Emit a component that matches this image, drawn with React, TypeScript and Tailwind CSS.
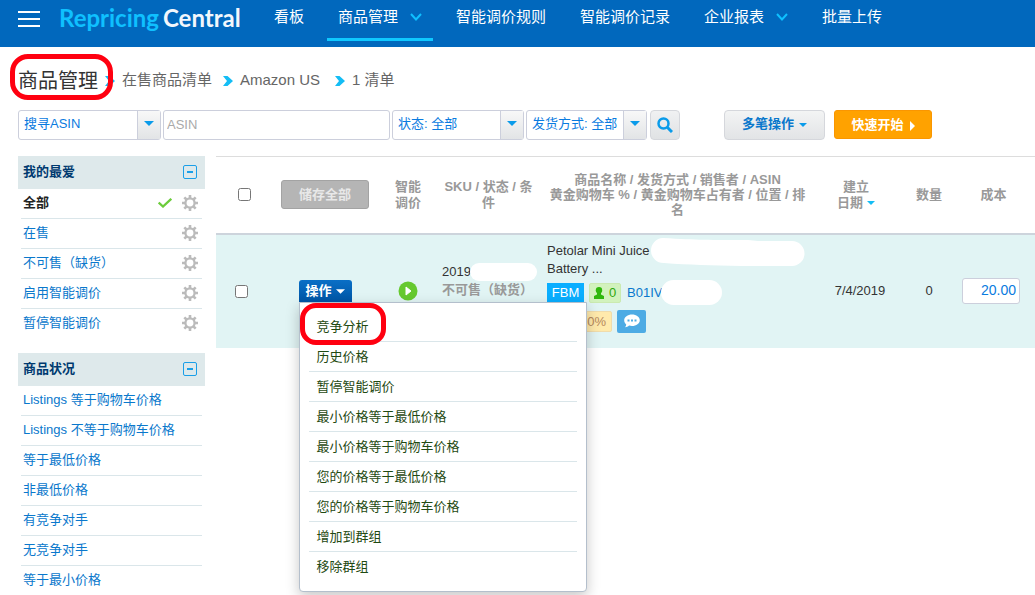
import { useState } from 'react';
import type { ReactNode } from 'react';
import clsx from 'clsx';

const NAV = [
  { label: '看板' },
  { label: '商品管理', active: true, menu: true },
  { label: '智能调价规则' },
  { label: '智能调价记录' },
  { label: '企业报表', menu: true },
  { label: '批量上传' },
];

const FAVORITES = ['全部', '在售', '不可售（缺货）', '启用智能调价', '暂停智能调价'];

const CONDITIONS = [
  'Listings 等于购物车价格',
  'Listings 不等于购物车价格',
  '等于最低价格',
  '非最低价格',
  '有竞争对手',
  '无竞争对手',
  '等于最小价格',
];

const ACTIONS = [
  '竞争分析',
  '历史价格',
  '暂停智能调价',
  '最小价格等于最低价格',
  '最小价格等于购物车价格',
  '您的价格等于最低价格',
  '您的价格等于购物车价格',
  '增加到群组',
  '移除群组',
];

function GearIcon() {
  return (
    <svg viewBox="0 0 16 16" className="h-4 w-4 text-[#bbbbbb]" fill="none" stroke="currentColor" aria-hidden>
      <circle cx="8" cy="8" r="4.6" strokeWidth="2.3" />
      <path
        strokeWidth="2.6"
        d="M8 0v3M8 13v3M0 8h3M13 8h3M2.3 2.3l2.200 2.200M11.500 11.500l2.200 2.200M2.300 13.700l2.200-2.200M11.500 4.500l2.200-2.200"
      />
    </svg>
  );
}

function Caret({ className }: { className?: string }) {
  return (
    <svg viewBox="0 0 10 5" className={className} fill="currentColor" aria-hidden>
      <path d="M0 0h10L5 5z" />
    </svg>
  );
}

function CrumbArrow() {
  return (
    <svg viewBox="0 0 10 10" className="h-[10px] w-[10px] shrink-0 text-[#14bdf5]" fill="currentColor" aria-hidden>
      <path d="M0 0h4.500L10 5l-5.500 5H0l4-5z" />
    </svg>
  );
}

function FilterSelect({ label, value, className }: { label: string; value: string; className: string }) {
  return (
    <div className={clsx('relative h-[30px]', className)}>
      <select
        aria-label={label}
        className="h-full w-full appearance-none rounded-[3px] border border-[#cccfdc] bg-white pb-[2px] pl-[5px] text-[13px] text-[#0a7be0] outline-none"
      >
        <option>{value}</option>
      </select>
      <span className="pointer-events-none absolute top-px right-px bottom-px flex w-[23px] items-center justify-center border-l border-[#cccfdc] bg-gradient-to-b from-[#f8f8f8] to-[#e2e4e6]">
        <Caret className="mb-1 h-[5px] w-[10px] text-[#0a9bea]" />
      </span>
    </div>
  );
}

function SidePanel({ title, children }: { title: string; children: ReactNode }) {
  return (
    <section>
      <div className="flex h-[33px] items-center justify-between bg-[#dee9eb] pr-2 pb-px pl-[5px]">
        <h2 className="text-[13px] font-bold text-[#003a70]">{title}</h2>
        <button type="button" aria-label={`收起${title}`}>
          <svg viewBox="0 0 14 14" className="h-[14px] w-[14px]" fill="none" stroke="#1a9fe8" aria-hidden>
            <rect x="0.5" y="0.5" width="13" height="13" rx="1.5" />
            <path d="M4 7h6" strokeWidth="2" />
          </svg>
        </button>
      </div>
      <ul className="px-[3px]">{children}</ul>
    </section>
  );
}

function ActionMenu() {
  return (
    <ul className="absolute top-full left-0 z-20 w-72 rounded-b-[4px] border border-[#b4bfcc] bg-white px-[9px] pt-[9px] pb-[10px] text-left shadow-[0_5px_14px_rgba(0,0,0,0.22)]">
      {ACTIONS.map((action, i) => (
        <li key={action} className="relative border-b border-[#dae6ea] last:border-b-0">
          <button type="button" className="block w-full pt-[3px] pb-[2px] pl-2 text-left text-[13px] leading-6 text-[#1f4a12]">
            {action}
          </button>
          {i === 0 && (
            <span className="pointer-events-none absolute -top-[9px] -left-[9px] h-[42px] w-[86px] rounded-[16px] border-5 border-[#ff0010]" />
          )}
        </li>
      ))}
    </ul>
  );
}

function ListingTable() {
  const [open, setOpen] = useState(true);

  return (
    <table className="w-full table-fixed border-collapse text-[13px]">
      <colgroup>
        <col className="w-[55px]" />
        <col className="w-[108px]" />
        <col className="w-[58px]" />
        <col className="w-[103px]" />
        <col />
        <col className="w-[82px]" />
        <col className="w-[64px]" />
        <col className="w-[74px]" />
      </colgroup>
      <thead>
        <tr className="h-[77px] border-t border-b-2 border-t-[#dddddd] border-b-[#cdd4dc] text-center leading-4 text-[#999999]">
          <th className="pl-[2px]">
            <input type="checkbox" aria-label="全选" className="block mx-auto h-[13px] w-[13px]" />
          </th>
          <th>
            <button
              type="button"
              className="h-[29px] w-[88px] rounded-[3px] border border-[#a3a3a3] bg-[#b5b5b5] text-[13px] font-bold text-[#e8e8e8]"
            >
              储存全部
            </button>
          </th>
          <th className="px-3 font-bold">智能调价</th>
          <th className="px-1 font-bold">SKU / 状态 / 条件</th>
          <th className="px-1 leading-[15px] font-bold">
            商品名称 / 发货方式 / 销售者 / ASIN
            <br />
            黄金购物车 % / 黄金购物车占有者 / 位置 / 排
            <br />名
          </th>
          <th className="font-bold">
            建立
            <br />
            <span className="inline-flex items-center gap-1">
              日期
              <Caret className="h-1 w-2 text-[#14bdf5]" />
            </span>
          </th>
          <th className="font-bold">数量</th>
          <th className="pr-[9px] font-bold">成本</th>
        </tr>
      </thead>
      <tbody>
        <tr className="h-[114px] bg-[#e1f4f4] text-[#333333]">
          <td className="pr-1">
            <input type="checkbox" aria-label="选择商品" className="block mx-auto h-[13px] w-[13px]" />
          </td>
          <td>
            <div className="relative mx-auto w-[53px]">
              <button
                type="button"
                aria-expanded={open}
                onClick={() => setOpen(!open)}
                className="flex h-[22px] w-full items-center justify-center gap-1 rounded-t-[3px] bg-gradient-to-b from-[#0a6fc6] to-[#0055a5] font-bold text-white"
              >
                操作
                <Caret className="h-[5px] w-[9px]" />
              </button>
              {open && <ActionMenu />}
            </div>
          </td>
          <td>
            <button type="button" aria-label="启用智能调价" className="mx-auto block">
              <svg viewBox="0 0 20 20" className="h-5 w-5" aria-hidden>
                <circle cx="10" cy="10" r="9.5" fill="#66c92f" />
                <path d="M8 6l5 4-5 4z" fill="#fff" stroke="#fff" />
              </svg>
            </button>
          </td>
          <td className="pb-5 pl-[5px] leading-[18px]">
            <div className="relative">
              2019
              <span className="absolute top-0 left-7 h-[18px] w-[67px] rounded-full bg-white" />
            </div>
            <div className="font-bold whitespace-nowrap text-[#999999]">不可售（缺货）</div>
          </td>
          <td className="pb-2 pl-[7px] leading-[18px]">
            <div className="relative">
              Petolar Mini Juice
              <br />
              Battery ...
              <svg viewBox="0 0 155 28" className="absolute -top-1 left-[103px] h-7 w-[155px]" fill="#fff" aria-hidden>
                <path d="M13 0C48 2 60 2 98 2l10 1h34a12.500 12.500 0 0 1 0 25H92C60 27 40 27 14 25A12.500 12.500 0 0 1 13 0z" />
              </svg>
            </div>
            <div className="mt-[5px] flex items-center">
              <span className="h-5 w-[37px] bg-[#0aaeff] text-center leading-5 text-white">FBM</span>
              <span className="ml-[5px] flex h-5 w-8 items-center justify-center gap-[5px] rounded-[2px] border border-[#cbeab0] bg-[#d2f2bd] text-[#2fa80c]">
                <svg viewBox="0 0 10 12" className="h-3 w-[10px]" fill="#2fb80c" aria-hidden>
                  <circle cx="5" cy="3.2" r="3.2" />
                  <path d="M3 5h4v2.500l3 1.500v3H0V9l3-1.500z" />
                </svg>
                0
              </span>
              <span className="relative ml-[6px]">
                <a href="#asin" className="text-[#0a78cc]">
                  B01IV
                </a>
                <span className="absolute -top-[4px] left-[34px] h-[25px] w-[61px] rounded-full bg-white" />
              </span>
            </div>
            <div className="mt-[7px] flex items-center gap-[5px]">
              <span className="h-[21px] w-[65px] rounded-[2px] border border-[#f0dcab] bg-[#ffeaac] pr-[5px] text-right leading-5 text-[#b5895c]">
                0%
              </span>
              <button
                type="button"
                aria-label="留言"
                className="flex h-[23px] w-[29px] items-center justify-center rounded-[2px] bg-[#4dabe4]"
              >
                <svg viewBox="0 0 16 14" className="h-[14px] w-4" aria-hidden>
                  <path
                    d="M8 .5c4.300 0 7.800 2.500 7.800 5.700S12.300 12 8 12c-1 0-2-.1-2.900-.4C4 12.700 2.500 13.300 1 13.300c.8-.9 1.200-1.800 1.200-2.900C.9 9.300.2 7.900.2 6.200.2 3 3.700.5 8 .5z"
                    fill="#fff"
                  />
                  <path d="M3.500 5.500h2v2h-2zM7 5.500h2v2H7zM10.500 5.500h2v2h-2z" fill="#4dabe4" />
                </svg>
              </button>
            </div>
          </td>
          <td className="pl-2 text-center">7/4/2019</td>
          <td className="text-center">0</td>
          <td className="pr-[15px]">
            <input
              aria-label="成本"
              defaultValue="20.00"
              className="ml-auto block h-[26px] w-[58px] rounded-[3px] border border-[#cccfdc] bg-white pr-[3px] pb-[2px] text-right text-[14px] text-[#0a7be0]"
            />
          </td>
        </tr>
      </tbody>
    </table>
  );
}

export default function App() {
  return (
    <div className="min-h-screen bg-white font-['Liberation_Sans','Noto_Sans_CJK_SC',sans-serif]">
      <header className="flex h-[47px] items-start bg-[#0168bd] pl-[18px] text-white">
        <button type="button" aria-label="菜单" className="mt-[11px] flex w-[22px] flex-col gap-[5px]">
          <span className="h-[2px] bg-white" />
          <span className="h-[2px] bg-white" />
          <span className="h-[2px] bg-white" />
        </button>
        <a
          href="#home"
          className="ml-[19px] flex w-[184px] shrink-0 gap-1 font-['Lato',sans-serif] text-[24px] leading-9 font-bold"
        >
          <span className="text-[#0fc0ff]">Repricing</span>
          <span className="text-[#f2f7fc]">Central</span>
        </a>
        <nav className="ml-5 flex shrink-0 gap-3">
          {NAV.map((item) => (
            <a
              key={item.label}
              href="#nav"
              className={clsx(
                'flex h-[41px] items-start gap-3 border-b-3 px-[11px] text-[15px] leading-[34px]',
                item.active ? 'border-[#0fc8ff]' : 'border-transparent',
              )}
            >
              {item.label}
              {item.menu && (
                <svg viewBox="0 0 12 8" className="mt-[13px] h-2 w-3" fill="none" stroke="#0fc0ff" strokeWidth="2" aria-hidden>
                  <path d="M1 1l5 5.500L11 1" />
                </svg>
              )}
            </a>
          ))}
        </nav>
      </header>

      <div className="flex h-[63px] items-center gap-[7px] pt-1 pl-[18px] text-[15px] text-[#666666]">
        <h1 className="relative text-[20px] leading-7 text-[#333333]">
          商品管理
          <span className="pointer-events-none absolute -top-[13px] -left-2 z-10 h-[46px] w-[103px] rounded-[18px] border-5 border-[#ff0010]" />
        </h1>
        <CrumbArrow />
        <span className="mr-1">在售商品清单</span>
        <CrumbArrow />
        <span className="mr-2">Amazon US</span>
        <CrumbArrow />
        <span>1 清单</span>
      </div>

      <form className="flex items-start pl-[18px]" onSubmit={(e) => e.preventDefault()}>
        <div className="flex gap-[2px]">
          <FilterSelect label="搜寻栏位" value="搜寻ASIN" className="w-[143px]" />
          <input
            aria-label="ASIN"
            placeholder="ASIN"
            className="h-[30px] w-[227px] rounded-[3px] border border-[#cccfdc] pb-[2px] pl-[3px] text-[13px] outline-none placeholder:text-[#aaaaaa]"
          />
          <FilterSelect label="状态" value="状态: 全部" className="w-[132px]" />
          <FilterSelect label="发货方式" value="发货方式: 全部" className="w-[121px]" />
        </div>
        <button
          type="submit"
          aria-label="搜寻"
          className="ml-[3px] flex h-[30px] w-[30px] items-center justify-center rounded-[4px] border border-[#d5d7dc] bg-gradient-to-b from-[#f0f1f2] to-[#e0e2e4]"
        >
          <svg viewBox="0 0 16 16" className="h-4 w-4" fill="none" stroke="#0a9bea" aria-hidden>
            <circle cx="6.5" cy="6.5" r="5" strokeWidth="2.5" />
            <path d="M10.500 10.500l4.500 4.500" strokeWidth="3" />
          </svg>
        </button>
        <button
          type="button"
          className="ml-11 flex h-[30px] w-[101px] items-center justify-center gap-[5px] rounded-[4px] border border-[#d5d7dc] bg-gradient-to-b from-[#f3f4f4] to-[#e2e4e6] pb-[2px] text-[13px] font-bold text-[#0a78cc]"
        >
          多笔操作
          <Caret className="mt-[2px] h-1 w-2 text-[#0a9bea]" />
        </button>
        <button
          type="button"
          className="ml-[9px] flex h-[29px] w-[98px] items-center justify-center gap-[6px] rounded-[3px] border border-[#fa9600] bg-[#ffa200] text-[13px] font-bold text-white"
        >
          快速开始
          <svg viewBox="0 0 5 10" className="mt-[2px] h-[10px] w-[5px]" fill="#fff" aria-hidden>
            <path d="M0 0l5 5-5 5z" />
          </svg>
        </button>
      </form>

      <div className="mt-4 flex items-start gap-[11px] pl-[18px]">
        <aside className="flex w-[187px] shrink-0 flex-col gap-[14px]">
          <SidePanel title="我的最爱">
            {FAVORITES.map((name, i) => (
              <li
                key={name}
                className="flex h-[30px] items-center border-b border-[#dae6ea] pr-1 pb-[2px] pl-[2px] text-[13px] last:border-b-0"
              >
                <a href="#filter" className={clsx('flex-1', i === 0 ? 'font-bold text-[#222222]' : 'text-[#0a78cc]')}>
                  {name}
                </a>
                {i === 0 && (
                  <svg viewBox="0 0 14 10" className="mr-[10px] h-[10px] w-[14px]" fill="none" stroke="#6ccc3c" strokeWidth="2.3" aria-hidden>
                    <path d="M.7 4.500L5 8.500 13.300.8" />
                  </svg>
                )}
                <button type="button" aria-label={`设置${name}`}>
                  <GearIcon />
                </button>
              </li>
            ))}
          </SidePanel>
          <SidePanel title="商品状况">
            {CONDITIONS.map((name) => (
              <li key={name} className="flex h-[30px] items-center border-b border-[#dae6ea] pb-[2px] pl-[2px] text-[13px]">
                <a href="#filter" className="text-[#0a78cc]">
                  {name}
                </a>
              </li>
            ))}
          </SidePanel>
        </aside>
        <main className="min-w-0 flex-1">
          <ListingTable />
        </main>
      </div>
    </div>
  );
}
